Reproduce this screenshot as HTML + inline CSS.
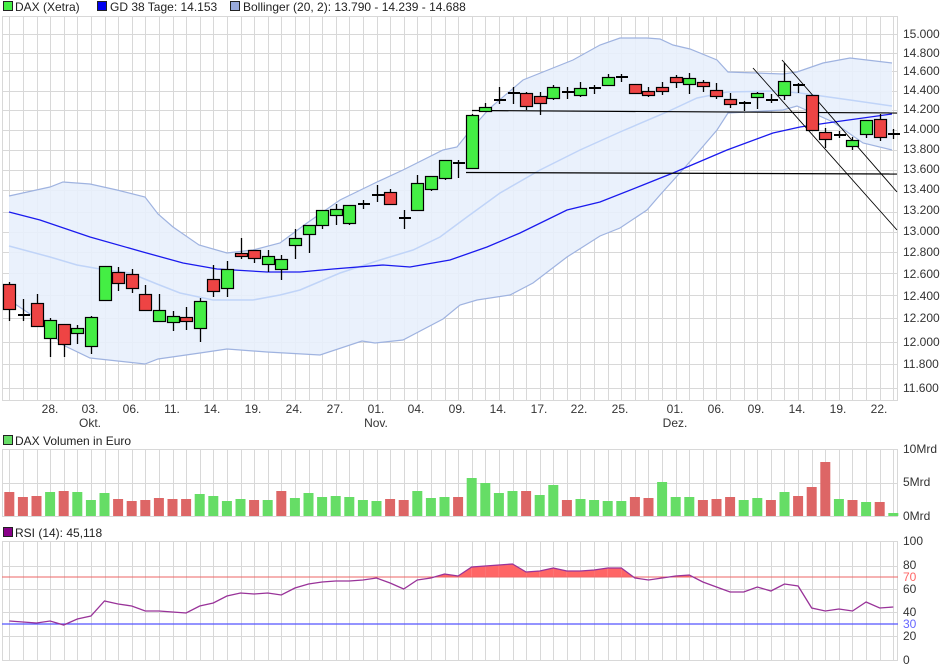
<!DOCTYPE html>
<html><head><meta charset="utf-8"><style>
html,body{margin:0;padding:0;background:#fff;}
svg{display:block;font-family:"Liberation Sans",sans-serif;}
</style></head><body>
<svg id="s" width="940" height="670" viewBox="0 0 940 670" xmlns="http://www.w3.org/2000/svg">
<g id="grid"></g>
<g id="band"></g>
<g id="lines"></g>
<g id="candles"></g>
<g id="vol"></g>
<g id="rsi"></g>
<g font-size="12" fill="#222">
<rect x="3.5" y="1.5" width="9" height="9" fill="#44ee44" stroke="#222"/>
<text x="15" y="11">DAX (Xetra)</text>
<rect x="97.5" y="1.5" width="9" height="9" fill="#0000ee" stroke="#222"/>
<text x="110" y="11">GD 38 Tage: 14.153</text>
<rect x="230.5" y="1.5" width="9" height="9" fill="#99aadd" stroke="#222"/>
<text x="243" y="11">Bollinger (20, 2): 13.790 - 14.239 - 14.688</text>
<rect x="3.5" y="435.5" width="9" height="9" fill="#66dd66" stroke="#222"/>
<text x="15" y="445">DAX Volumen in Euro</text>
<rect x="3.5" y="527.5" width="9" height="9" fill="#880088" stroke="#222"/>
<text x="15" y="537">RSI (14): 45,118</text>
</g>
<g font-size="12" fill="#333">
<text x="903" y="38">15.000</text>
<text x="903" y="57">14.800</text>
<text x="903" y="75">14.600</text>
<text x="903" y="94">14.400</text>
<text x="903" y="113">14.200</text>
<text x="903" y="133">14.000</text>
<text x="903" y="153">13.800</text>
<text x="903" y="173">13.600</text>
<text x="903" y="193">13.400</text>
<text x="903" y="214">13.200</text>
<text x="903" y="235">13.000</text>
<text x="903" y="256">12.800</text>
<text x="903" y="278">12.600</text>
<text x="903" y="300">12.400</text>
<text x="903" y="322">12.200</text>
<text x="903" y="346">12.000</text>
<text x="903" y="368">11.800</text>
<text x="903" y="392">11.600</text>
<text x="903" y="453">10Mrd</text>
<text x="903" y="486">5Mrd</text>
<text x="903" y="520">0Mrd</text>
<text x="903" y="545">100</text>
<text x="903" y="569">80</text>
<text x="903" y="581" fill="#ff6666">70</text>
<text x="903" y="593">60</text>
<text x="903" y="616">40</text>
<text x="903" y="628" fill="#6666ff">30</text>
<text x="903" y="640">20</text>
<text x="903" y="664">0</text>
</g>
<g font-size="12" fill="#333" text-anchor="middle">
<text x="50" y="413">28.</text>
<text x="90" y="413">03.</text>
<text x="131" y="413">06.</text>
<text x="172" y="413">11.</text>
<text x="212" y="413">14.</text>
<text x="253" y="413">19.</text>
<text x="294" y="413">24.</text>
<text x="335" y="413">27.</text>
<text x="376" y="413">01.</text>
<text x="416" y="413">04.</text>
<text x="457" y="413">09.</text>
<text x="498" y="413">14.</text>
<text x="539" y="413">17.</text>
<text x="579" y="413">22.</text>
<text x="620" y="413">25.</text>
<text x="675" y="413">01.</text>
<text x="716" y="413">06.</text>
<text x="756" y="413">09.</text>
<text x="797" y="413">14.</text>
<text x="838" y="413">19.</text>
<text x="879" y="413">22.</text>
<text x="90" y="427">Okt.</text>
<text x="376" y="427">Nov.</text>
<text x="675" y="427">Dez.</text>
</g>
</svg>
<script>
var NS="http://www.w3.org/2000/svg";
function el(p,t,a){var e=document.createElementNS(NS,t);for(var k in a)e.setAttribute(k,a[k]);document.getElementById(p).appendChild(e);return e;}
function X(i){return 9.3+13.6*i;}
var G="#d8d8d8";
// grids
[[16,400,[16,34,53,71,91,110,130,150,170,190,212,232,252,273,295,318,342,364,388,400]],
 [449,516,[449,483,516]],
 [541,660,[541,566,589,612,636,660]]].forEach(function(p){
  for(var i=0;i<66;i++){var x=Math.round(X(i))+0.5;el("grid","line",{x1:x,y1:p[0],x2:x,y2:p[1],stroke:G});}
  el("grid","line",{x1:2.5,y1:p[0],x2:2.5,y2:p[1],stroke:G});
  el("grid","line",{x1:897.5,y1:p[0],x2:897.5,y2:p[1],stroke:G});
  p[2].forEach(function(y){el("grid","line",{x1:2,y1:y+0.5,x2:898,y2:y+0.5,stroke:G});});
});
var up=[[9,196],[50,187],[63,182],[90,184],[117,190],[145,197],[158,214],[173,227],[199,245],[227,253],[253,250],[280,243],[307,223],[340,200],[377,182],[403,170],[443,150],[457,147],[473,127],[490,108],[523,80],[573,60],[600,45],[620,38],[647,38],[660,39],[673,45],[690,49],[717,60],[728,72],[783,74],[797,72],[823,63],[850,58],[892,63]];
var lo=[[9,300],[36,318],[63,345],[90,358],[145,364],[158,359],[200,353],[227,349],[267,352],[320,355],[362,341],[375,343],[403,340],[443,319],[460,305],[477,300],[510,295],[533,283],[567,257],[600,236],[620,228],[647,210],[660,195],[687,165],[717,130],[728,113],[783,110],[797,106],[833,122],[863,143],[892,150]];
var mid=[[9,246],[50,257],[77,265],[100,269],[130,273],[157,284],[180,293],[213,300],[253,300],[280,295],[300,290],[340,273],[380,260],[413,250],[440,237],[467,217],[500,193],[540,170],[580,150],[620,132],[667,112],[697,98],[727,92],[777,91],[800,93],[850,100],[892,106]];
var gd=[[9,212],[40,220],[90,237],[143,252],[183,263],[217,269],[267,272],[300,272],[333,269],[383,265],[410,267],[450,260],[487,247],[520,233],[567,210],[600,202],[643,185],[673,173],[727,150],[773,133],[800,127],[827,123],[892,114]];
function pts(a){return a.map(function(p){return p[0]+","+p[1];}).join(" ");}
el("band","polygon",{points:pts(up)+" "+pts(lo.slice().reverse()),fill:"#e8effc","fill-opacity":"0.9"});
el("band","polyline",{points:pts(up),fill:"none",stroke:"#9fb3e0","stroke-width":1.2});
el("band","polyline",{points:pts(lo),fill:"none",stroke:"#9fb3e0","stroke-width":1.2});
el("band","polyline",{points:pts(mid),fill:"none",stroke:"#c0d4f8","stroke-width":1.5});
el("band","polyline",{points:pts(gd),fill:"none",stroke:"#1a1aee","stroke-width":1.3});
// trend lines
el("lines","line",{x1:472,y1:110.5,x2:897,y2:113,stroke:"#000","stroke-width":1.2});
el("lines","line",{x1:466,y1:172.5,x2:897,y2:174,stroke:"#000","stroke-width":1.2});
el("lines","line",{x1:753,y1:68,x2:897,y2:230,stroke:"#000","stroke-width":0.9});
el("lines","line",{x1:782,y1:60,x2:897,y2:192,stroke:"#000","stroke-width":0.9});
var C=[["r",284,309,282,321],["x",315,0,299,321],["r",303,326,294,326],["g",320,338,318,357],["r",324,344,324,357],["g",328,333,325,344],["g",317,346,316,354],["g",266,300,266,300],["r",272,283,267,291],["r",274,288,269,293],["r",294,310,285,310],["g",310,321,294,321],["g",316,322,311,331],["r",317,321,307,330],["g",301,328,298,342],["r",279,291,265,297],["g",269,288,261,297],["r",253,256,238,259],["r",250,258,250,263],["g",256,264,250,272],["g",259,269,255,280],["g",238,245,229,259],["g",225,234,225,253],["g",210,225,210,229],["g",209,215,204,225],["g",205,223,205,225],["x",204,0,200,209],["x",195,0,185,202],["r",192,204,189,204],["x",218,0,210,229],["g",183,210,175,210],["g",176,189,176,191],["g",160,178,160,180],["x",163,0,160,178],["g",115,168,114,168],["g",107,111,103,111],["x",100,0,87,104],["x",93,0,87,104],["r",93,106,92,110],["r",96,103,92,115],["g",87,98,85,100],["x",92,0,87,99],["g",88,95,82,97],["x",88,0,85,94],["g",77,85,74,86],["x",77,0,74,82],["r",84,93,84,93],["r",91,95,87,97],["r",87,91,82,95],["r",77,82,75,88],["g",78,84,73,94],["r",82,86,80,92],["r",90,96,83,99],["r",99,104,93,108],["x",103,0,101,111],["g",93,97,92,109],["x",100,0,94,103],["g",81,95,63,100],["x",85,0,83,93],["r",95,130,95,130],["r",132,139,128,148],["x",135,0,131,138],["g",140,146,137,150],["g",120,134,120,138],["r",119,137,114,141],["x",134,0,129,139]];
C.forEach(function(c,i){var x=Math.round(X(i));
 el("candles","line",{x1:x+0.5,y1:c[3],x2:x+0.5,y2:c[4],stroke:"#000","stroke-width":1.3});
 if(c[0]=="x"){el("candles","rect",{x:x-5,y:c[1]-1,width:12,height:2,fill:"#000"});}
 else el("candles","rect",{x:x-5.5,y:c[1]+0.5,width:12,height:Math.max(c[2]-c[1],2),fill:c[0]=="g"?"#44ee44":"#ee4444",stroke:"#000","stroke-width":1.2});
});
var V=[["r",492],["r",497],["r",496],["g",492],["r",491],["g",492],["g",500],["g",493],["r",499],["r",501],["r",500],["r",498],["r",499],["r",499],["g",494],["g",496],["g",501],["g",499],["r",500],["g",500],["r",491],["g",498],["g",493],["g",497],["g",496],["g",497],["g",500],["g",501],["r",499],["r",500],["g",491],["g",498],["g",497],["r",497],["g",478],["g",483],["g",493],["g",491],["r",491],["g",495],["g",485],["r",500],["g",499],["g",500],["g",501],["g",501],["r",497],["r",498],["g",482],["g",497],["g",497],["r",500],["r",499],["r",497],["g",500],["g",498],["r",500],["g",492],["r",496],["r",487],["r",462],["g",499],["r",500],["g",502],["r",502],["g",513]];
V.forEach(function(v,i){var x=X(i);el("vol","rect",{x:x-5,y:v[1],width:10,height:516-v[1],fill:v[0]=="g"?"#66dd66":"#dd6666"});});
var R=[621,622,623,621,625,619,616,601,604,606,611,611,612,613,606,603,596,593,594,593,595,588,584,582,581,581,580,578,583,589,580,578,574,576,567,566,565,564,572,571,568,571,571,570,568,568,578,580,578,576,575,582,587,592,592,587,591,584,586,608,611,609,611,602,608,607];
// fill above 70 (y<577)
var L=577,f="";
for(var i=0;i<R.length-1;i++){var x1=X(i),x2=X(i+1),y1=R[i],y2=R[i+1];
 var a1=Math.min(y1,L),a2=Math.min(y2,L);
 if(y1<L||y2<L){var p=[];
  if(y1<L&&y2<L)p=[[x1,L],[x1,y1],[x2,y2],[x2,L]];
  else if(y1<L){var t=(L-y1)/(y2-y1),xm=x1+t*(x2-x1);p=[[x1,L],[x1,y1],[xm,L]];}
  else{var t=(L-y1)/(y2-y1),xm=x1+t*(x2-x1);p=[[xm,L],[x2,y2],[x2,L]];}
  el("rsi","polygon",{points:pts(p),fill:"#ff6666"});}
}
el("rsi","line",{x1:2,y1:L,x2:898,y2:L,stroke:"#ee6666","stroke-width":1});
el("rsi","line",{x1:2,y1:624,x2:898,y2:624,stroke:"#5555ff","stroke-width":1.2});
el("rsi","polyline",{points:R.map(function(y,i){return X(i)+","+y;}).join(" "),fill:"none",stroke:"#993399","stroke-width":1.3});
</script>
</body></html>
